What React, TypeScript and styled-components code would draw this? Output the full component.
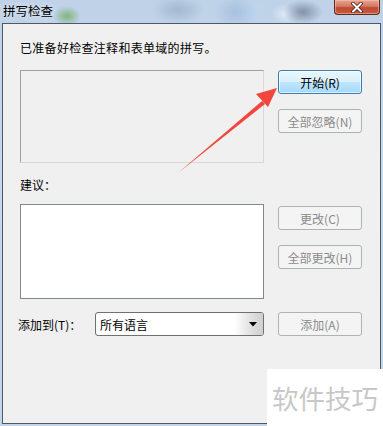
import React from "react";
import styled, { createGlobalStyle } from "styled-components";

const Global = createGlobalStyle`
  html, body { margin: 0; padding: 0; }
  body { width: 383px; height: 426px; overflow: hidden; background: #c3d5e9; }
  * { box-sizing: border-box; }
`;

const FONT = `"Noto Sans CJK SC", "Noto Sans", "Liberation Sans", sans-serif`;

const Win = styled.div`
  position: relative;
  width: 383px;
  height: 426px;
  display: flex;
  flex-direction: column;
  font-family: ${FONT};
  font-size: 12px;
  color: #000;
  background:
    radial-gradient(ellipse 14px 10px at 67px 16px, rgba(110,170,90,0.75), transparent),
    radial-gradient(ellipse 26px 14px at 178px 10px, rgba(150,175,200,0.7), transparent),
    radial-gradient(ellipse 22px 16px at 236px 12px, rgba(150,180,215,0.6), transparent),
    radial-gradient(ellipse 18px 12px at 250px 12px, rgba(190,215,240,0.9), transparent),
    radial-gradient(ellipse 20px 12px at 303px 12px, rgba(90,105,125,0.6), transparent),
    radial-gradient(ellipse 14px 10px at 285px 14px, rgba(230,240,250,0.8), transparent),
    linear-gradient(180deg, #bfd2e8 0%, #c6d8ec 40%, #c2d5ea 100%);
`;

const TitleBar = styled.div`
  height: 23px;
  flex: none;
  display: flex;
  align-items: flex-start;
  justify-content: space-between;
  padding-left: 3px;
  padding-right: 2px;
`;

const Title = styled.div`
  font-size: 12.5px;
  line-height: 22px;
  color: #000;
  text-shadow: 0 0 6px rgba(255,255,255,0.9);
`;

const CloseBtn = styled.div`
  width: 46px;
  height: 15px;
  margin-right: 1px;
  border: 1px solid #5b2c22;
  border-top: none;
  border-radius: 0 0 4px 4px;
  background: linear-gradient(180deg, #e5a593 0%, #d47a64 45%, #c04a30 55%, #c65a3e 100%);
  box-shadow: inset 0 0 0 1px rgba(255,200,180,0.5);
  display: flex;
  align-items: center;
  justify-content: center;
`;

const Client = styled.div`
  flex: 1;
  margin: 0 2px 2px 2px;
  border: 1px solid #4e5866;
  background: #f0f0f0;
  padding: 0 0 0 17px;
  display: flex;
  flex-direction: column;
`;

const Message = styled.div`
  margin-top: 16px;
  line-height: 16px;
  letter-spacing: 0.3px;
`;

const Grid = styled.div<{ $top: number }>`
  display: grid;
  grid-template-columns: 244px 84px;
  column-gap: 14px;
  margin-top: ${(p) => p.$top}px;
  align-items: start;
`;

const Label = styled.div<{ $top: number }>`
  margin-top: ${(p) => p.$top}px;
  line-height: 16px;
`;

const Box = styled.div<{ $h: number; $white?: boolean }>`
  height: ${(p) => p.$h}px;
  border: 1px solid ${(p) => (p.$white ? "#828790" : "#a0a0a0")};
  border-right-color: ${(p) => (p.$white ? "#828790" : "#d8d8d8")};
  border-bottom-color: ${(p) => (p.$white ? "#828790" : "#d8d8d8")};
  background: ${(p) => (p.$white ? "#fff" : "#f0f0f0")};
`;

const BtnCol = styled.div`
  display: flex;
  flex-direction: column;
  gap: 15px;
`;

const Btn = styled.div<{ $primary?: boolean; $disabled?: boolean; $offset?: number }>`
  height: 24px;
  margin-top: ${(p) => p.$offset || 0}px;
  border-radius: 3px;
  display: flex;
  align-items: center;
  justify-content: center;
  font-size: 12px;
  color: ${(p) => (p.$disabled ? "#8b8b8b" : "#000")};
  border: 1px solid ${(p) => (p.$primary ? "#3c7fb1" : "#adb2b5")};
  background: ${(p) =>
    p.$primary
      ? "linear-gradient(180deg, #eaf6fd 0%, #d9f0fc 50%, #bee6fd 51%, #a7d9f5 100%)"
      : "#f4f4f4"};
  box-shadow: ${(p) => (p.$primary ? "inset 0 0 0 1px rgba(255,255,255,0.6)" : "none")};
`;

const AddCell = styled.div`
  display: flex;
  align-items: center;
  margin-left: -2px;
`;

const AddLabel = styled.div`
  width: 77px;
  flex: none;
  white-space: nowrap;
`;

const Select = styled.div`
  flex: 1;
  height: 24px;
  border: 1px solid #707070;
  border-radius: 3px;
  background: #fff;
  display: flex;
  align-items: stretch;
  overflow: hidden;
  box-shadow: inset 0 0 0 1px rgba(255,255,255,0.9);
`;

const SelectText = styled.div`
  flex: 1;
  padding-left: 4px;
  display: flex;
  align-items: center;
`;

const SelectArrow = styled.div`
  width: 28px;
  display: flex;
  align-items: center;
  justify-content: center;
  padding-left: 8px;
  background: linear-gradient(90deg, #fff 0%, #e8e8e8 40%, #cfcfcf 100%);
`;

const Overlay = styled.svg`
  position: absolute;
  left: 0;
  top: 0;
  pointer-events: none;
`;

const Watermark = styled.div`
  position: absolute;
  left: 267px;
  top: 369px;
  width: 116px;
  height: 57px;
  background: #fff;
  display: flex;
  align-items: center;
  padding-left: 5px;
  font-size: 26.5px;
  color: #c8c8c8;
  white-space: nowrap;
`;

export default function App() {
  return (
    <>
      <Global />
      <Win>
        <TitleBar>
          <Title>拼写检查</Title>
          <CloseBtn>
            <svg width="14" height="11" viewBox="0 0 14 11">
              <path d="M3 1.5 L11 9.5 M11 1.5 L3 9.5" stroke="#4a1d14" strokeWidth="3.6" strokeLinecap="round" />
              <path d="M3 1.5 L11 9.5 M11 1.5 L3 9.5" stroke="#fff" strokeWidth="2" strokeLinecap="round" />
            </svg>
          </CloseBtn>
        </TitleBar>
        <Client>
          <Message>已准备好检查注释和表单域的拼写。</Message>
          <Grid $top={14}>
            <Box $h={93} />
            <BtnCol>
              <Btn $primary>开始(R)</Btn>
              <Btn $disabled>全部忽略(N)</Btn>
            </BtnCol>
          </Grid>
          <Label $top={14}>建议：</Label>
          <Grid $top={11}>
            <Box $h={95} $white />
            <BtnCol>
              <Btn $disabled $offset={2}>更改(C)</Btn>
              <Btn $disabled>全部更改(H)</Btn>
            </BtnCol>
          </Grid>
          <Grid $top={13}>
            <AddCell>
              <AddLabel>添加到(T)：</AddLabel>
              <Select>
                <SelectText>所有语言</SelectText>
                <SelectArrow>
                  <svg width="8" height="5" viewBox="0 0 8 5">
                    <path d="M0 0 H8 L4 4.5 Z" fill="#000" />
                  </svg>
                </SelectArrow>
              </Select>
            </AddCell>
            <Btn $disabled>添加(A)</Btn>
          </Grid>
        </Client>
        <Overlay width="383" height="426" viewBox="0 0 383 426">
          <path d="M178 173 L262 101 L265 104 Z" fill="#f2453d" />
          <path d="M277 88 L256 94 L268 107 Z" fill="#f2453d" />
        </Overlay>
        <Watermark>软件技巧</Watermark>
      </Win>
    </>
  );
}
